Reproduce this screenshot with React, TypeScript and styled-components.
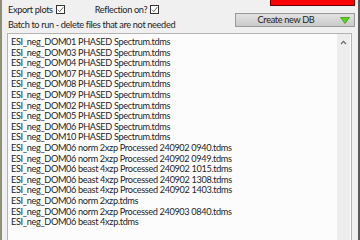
import { createGlobalStyle } from "styled-components";
import styled from "styled-components";

const GlobalStyle = createGlobalStyle`
  html, body {
    margin: 0;
    padding: 0;
    background: #f0f0f0;
  }
  * {
    box-sizing: border-box;
  }
`

const Window = styled.div`
  width: 360px;
  height: 240px;
  overflow: hidden;
  display: flex;
  flex-direction: column;
  background: #f0f0f0;
  border-left: 2px solid #8f8f78;
  border-right: 2px solid #5a5a5a;
  font-family: Lato, "Liberation Sans", sans-serif;
  font-size: 9.2px;
  letter-spacing: -0.35px;
  color: #1e1e1e;
`

const Header = styled.div`
  display: flex;
  justify-content: space-between;
  padding: 0 3px 0 6px;
`

const LeftCol = styled.div`
  display: flex;
  flex-direction: column;
`

const OptionsRow = styled.div`
  display: flex;
  align-items: center;
  height: 19px;
  gap: 30px;
`

const Option = styled.label`
  display: flex;
  align-items: center;
  gap: 3px;
`

const Box = styled.span`
  width: 9px;
  height: 9px;
  border: 1px solid #333;
  background: #fff;
  display: flex;
  align-items: center;
  justify-content: center;
`

const SectionLabel = styled.div`
  height: 12px;
  line-height: 12px;
  margin-bottom: 2px;
`

const RightCol = styled.div`
  display: flex;
  flex-direction: column;
  align-items: flex-end;
`

const Indicator = styled.div`
  width: 85px;
  height: 6px;
  background: #ff0000;
  border: 1px solid #6a0000;
  border-top: none;
  margin-bottom: 7px;
`

const DropButton = styled.div`
  width: 120px;
  height: 14px;
  display: flex;
  align-items: center;
  border: 1px solid #9a9a9a;
  background: linear-gradient(#e2e2e2, #c9c9c9);
  color: #222;
`

const ButtonText = styled.span`
  flex: 1;
  text-align: center;
  line-height: 12px;
`

const ArrowCell = styled.span`
  width: 18px;
  display: flex;
  justify-content: center;
`

const ListBox = styled.div`
  flex: 1;
  display: flex;
  margin: 0 6px 0 5px;
  border: 1px solid #b4b4b4;
  border-bottom: none;
  background: #fcfcfc;
`

const Rows = styled.div`
  flex: 1;
  padding: 3px 0 0 3px;
`

const Row = styled.div`
  height: 10.6px;
  line-height: 10.6px;
  white-space: nowrap;
`

const ScrollBar = styled.div`
  width: 13px;
  margin-right: 1px;
  background: #ededed;
  display: flex;
  justify-content: center;
  padding-top: 6px;
`

const files = [
  "ESI_neg_DOM01 PHASED Spectrum.tdms",
  "ESI_neg_DOM03 PHASED Spectrum.tdms",
  "ESI_neg_DOM04 PHASED Spectrum.tdms",
  "ESI_neg_DOM07 PHASED Spectrum.tdms",
  "ESI_neg_DOM08 PHASED Spectrum.tdms",
  "ESI_neg_DOM09 PHASED Spectrum.tdms",
  "ESI_neg_DOM02 PHASED Spectrum.tdms",
  "ESI_neg_DOM05 PHASED Spectrum.tdms",
  "ESI_neg_DOM06 PHASED Spectrum.tdms",
  "ESI_neg_DOM10 PHASED Spectrum.tdms",
  "ESI_neg_DOM06 norm 2xzp Processed 240902 0940.tdms",
  "ESI_neg_DOM06 norm 2xzp Processed 240902 0949.tdms",
  "ESI_neg_DOM06 beast 4xzp Processed 240902 1015.tdms",
  "ESI_neg_DOM06 beast 4xzp Processed 240902 1308.tdms",
  "ESI_neg_DOM06 beast 4xzp Processed 240902 1403.tdms",
  "ESI_neg_DOM06 norm 2xzp.tdms",
  "ESI_neg_DOM06 norm 2xzp Processed 240903 0840.tdms",
  "ESI_neg_DOM06 beast 4xzp.tdms",
]

function Check() {
  return (
    <svg width="7" height="7" viewBox="0 0 7 7">
      <path d="M0.8 3.6 L2.7 5.6 L6.3 1.2" fill="none" stroke="#555" strokeWidth="0.9" />
    </svg>
  )
}

export default function App() {
  return (
    <>
      <GlobalStyle />
      <Window>
        <Header>
          <LeftCol>
            <OptionsRow>
              <Option>Export plots <Box><Check /></Box></Option>
              <Option>Reflection on? <Box><Check /></Box></Option>
            </OptionsRow>
            <SectionLabel>Batch to run - delete files that are not needed</SectionLabel>
          </LeftCol>
          <RightCol>
            <Indicator />
            <DropButton>
              <ButtonText>Create new DB</ButtonText>
              <ArrowCell>
                <svg width="10" height="7" viewBox="0 0 10 7">
                  <path d="M0.5 0.5 L9.5 0.5 L5 6.5 Z" fill="#5cd21e" stroke="#3f9a14" strokeWidth="0.8" />
                </svg>
              </ArrowCell>
            </DropButton>
          </RightCol>
        </Header>
        <ListBox>
          <Rows>
            {files.map((f, i) => (
              <Row key={i}>{f}</Row>
            ))}
          </Rows>
          <ScrollBar>
            <svg width="7" height="5" viewBox="0 0 7 5">
              <path d="M1 4 L3.5 1.3 L6 4" fill="none" stroke="#666" strokeWidth="1.2" />
            </svg>
          </ScrollBar>
        </ListBox>
      </Window>
    </>
  );
}
